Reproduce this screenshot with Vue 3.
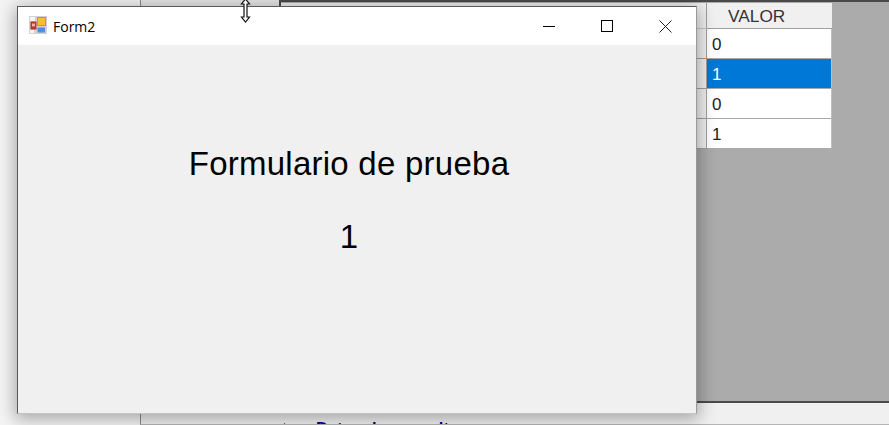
<script setup>
const rows = [
  { value: '0', selected: false },
  { value: '1', selected: true },
  { value: '0', selected: false },
  { value: '1', selected: false },
]
</script>

<template>
  <div class="desktop">
    <div class="parent-window">
      <div class="parent-main">
        <div class="side-panel"></div>
        <div class="mdi-area">
          <div class="grid">
            <div class="row-header head"></div>
            <div class="col-header">VALOR</div>
            <template v-for="(row, i) in rows" :key="i">
              <div class="row-header"></div>
              <div class="cell" :class="{ selected: row.selected }">{{ row.value }}</div>
            </template>
          </div>
        </div>
      </div>
      <div class="status-bar">
        <span class="status-tick"></span>
        <span class="status-link">Datos de consulta</span>
      </div>
    </div>

    <div class="form-window">
      <div class="title-bar">
        <svg class="app-icon" width="18" height="18" viewBox="0 0 18 18">
          <rect x="0" y="0" width="18" height="18" fill="#d2d2d2" />
          <rect x="1" y="1" width="5" height="4" fill="#f6f6f6" />
          <rect x="1" y="14" width="4" height="3" fill="#f4f4f4" />
          <rect x="1.500" y="5.500" width="6" height="8" fill="#b8352f" />
          <rect x="3" y="7.500" width="3" height="3" fill="#e8b0a8" />
          <rect x="8.500" y="1.500" width="8" height="8" fill="#f3c230" stroke="#c99a20" stroke-width="1" />
          <rect x="8.500" y="11.500" width="7.500" height="5" fill="#4d8fdc" />
        </svg>
        <span class="title-text">Form2</span>
        <div class="controls">
          <button class="ctl">
            <svg width="12" height="12" viewBox="0 0 12 12"><path d="M0 6.500H12" stroke="#000" fill="none" /></svg>
          </button>
          <button class="ctl mid">
            <svg width="12" height="12" viewBox="0 0 12 12"><rect x="0.500" y="0.500" width="11" height="11" stroke="#000" fill="none" /></svg>
          </button>
          <button class="ctl">
            <svg width="13" height="13" viewBox="0 0 13 13"><path d="M0.500 0.500L12.500 12.500M12.500 0.500L0.500 12.500" stroke="#222" fill="none" /></svg>
          </button>
        </div>
      </div>
      <div class="form-body">
        <div class="form-label">Formulario de prueba</div>
        <div class="form-label value">1</div>
      </div>
    </div>

    <svg class="cursor" width="11" height="23" viewBox="0 0 11 23">
      <path d="M5.500 -1L9.500 4H7V17H9.500L5.500 22L1.500 17H4V4H1.500Z" fill="#fff" stroke="#111" stroke-width="1.200" />
    </svg>
  </div>
</template>

<style>
html, body { margin: 0; padding: 0; overflow: hidden; }
</style>

<style scoped>
.desktop {
  position: relative;
  width: 889px;
  height: 425px;
  overflow: hidden;
  background: #f4f4f4;
  font-family: "Liberation Sans", Arial, sans-serif;
}
.parent-window {
  position: absolute;
  left: 140px;
  top: 0;
  right: 0;
  bottom: 0;
  box-sizing: border-box;
  border-left: 1px solid #8a8a8a;
  border-bottom: 1px solid #b5b5b5;
  background: #f0f0f0;
  display: flex;
  flex-direction: column;
}
.parent-main {
  flex: 1;
  display: flex;
  min-height: 0;
}
.side-panel {
  width: 138px;
  background: #e6e6e6;
}
.mdi-area {
  flex: 1;
  box-sizing: border-box;
  background: #ababab;
  border-top: 2px solid #4a4a4a;
  border-left: 2px solid #4a4a4a;
  border-bottom: 2px solid #4a4a4a;
  padding: 1px 0 0 0;
}
.grid {
  display: grid;
  grid-template-columns: 426px 125px;
  grid-template-rows: 26px repeat(4, 30px);
  width: 551px;
}
.row-header {
  background: #f0f0f0;
  box-sizing: border-box;
  border-right: 1px solid #a0a0a0;
  border-bottom: 1px solid #a0a0a0;
}
.row-header.head { border-bottom: 1px solid #c8c8c8; }
.col-header {
  background: #f0f0f0;
  box-sizing: border-box;
  border-bottom: 1px solid #a0a0a0;
  color: #333;
  font-size: 17.300px;
  line-height: 26px;
  padding-left: 21px;
}
.cell {
  background: #fff;
  box-sizing: border-box;
  border-bottom: 1px solid #a9a9a9;
  border-right: 1px solid #c0c0c0;
  color: #222;
  font-size: 17px;
  line-height: 30px;
  padding: 1px 0 0 5px;
}
.cell.selected {
  background: #0078d7;
  color: #fff;
}
.status-bar {
  height: 21px;
  flex: none;
  position: relative;
  overflow: hidden;
}
.status-tick {
  position: absolute;
  left: 143px;
  bottom: 0;
  width: 1px;
  height: 1px;
  background: #555;
}
.status-link {
  position: absolute;
  left: 175px;
  top: 15px;
  color: #00009c;
  font-size: 16.500px;
  font-weight: 700;
  line-height: 20px;
  white-space: nowrap;
}
.form-window {
  position: absolute;
  left: 17px;
  top: 6px;
  width: 680px;
  height: 408px;
  box-sizing: border-box;
  border-top: 1px solid #5a5a5a;
  border-left: 1px solid #5a5a5a;
  border-right: 1px solid #9a9a9a;
  border-bottom: 1px solid #c4c4c4;
  background: #f0f0f0;
  box-shadow: 0 3px 16px 2px rgba(0, 0, 0, 0.32);
  display: flex;
  flex-direction: column;
}
.title-bar {
  height: 38px;
  flex: none;
  background: #fff;
  display: flex;
  align-items: center;
  padding-left: 11px;
}
.app-icon {
  flex: none;
  margin-bottom: 2px;
}
.title-text {
  margin-left: 6px;
  font-family: "Open Sans", sans-serif;
  font-size: 14px;
  color: #000;
}
.controls {
  margin-left: auto;
  display: flex;
  margin-right: 1px;
}
.ctl {
  width: 59px;
  height: 36px;
  padding: 0;
  border: 0;
  background: transparent;
  display: flex;
  align-items: center;
  justify-content: center;
}
.ctl.mid { width: 58px; }
.form-body {
  flex: 1;
  display: flex;
  flex-direction: column;
  align-items: center;
  padding-top: 100px;
  gap: 36px;
  padding-right: 16px;
}
.form-label {
  font-size: 33px;
  line-height: 37px;
  letter-spacing: 0.250px;
  color: #000;
  white-space: nowrap;
}
.cursor {
  position: absolute;
  left: 240px;
  top: 0;
}
</style>
